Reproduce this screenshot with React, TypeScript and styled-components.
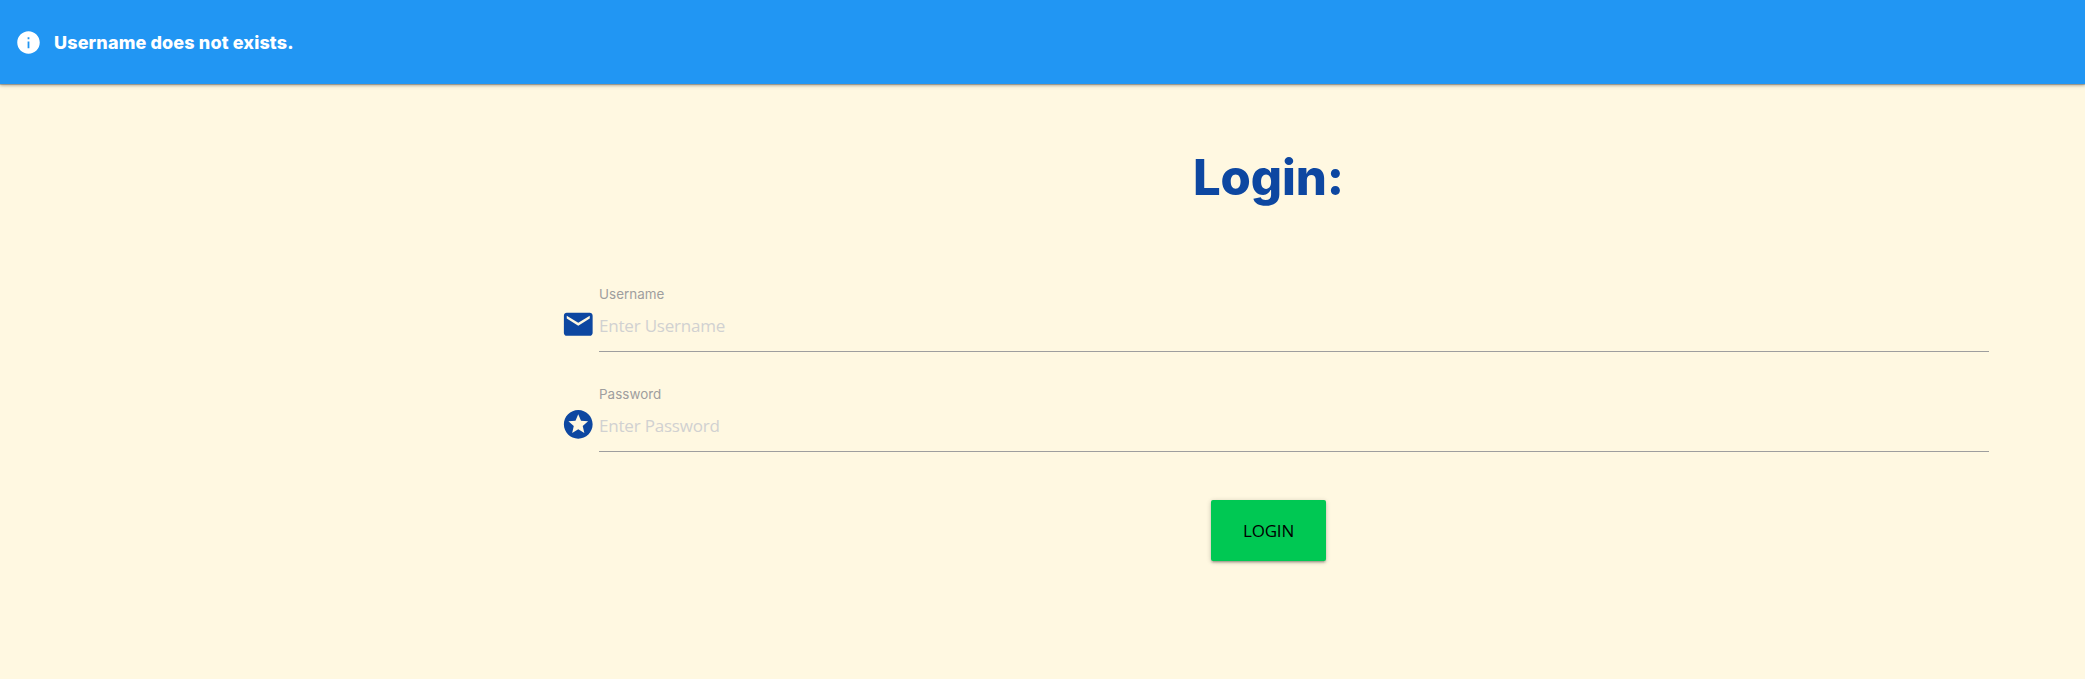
import React from 'react';
import styled, { createGlobalStyle } from 'styled-components';

const GlobalStyle = createGlobalStyle`
  *, *::before, *::after { box-sizing: border-box; }
  body {
    margin: 0;
    background: #fff8e1;
    font-family: Inter, "Liberation Sans", sans-serif;
  }
`;

const Page = styled.div`
  min-height: 100vh;
  overflow: hidden;
`;

const Alert = styled.div`
  display: flex;
  align-items: center;
  height: 84px;
  padding-left: 15px;
  gap: 12px;
  background: #2196f3;
  color: #fff;
  box-shadow: 0 2px 2px 0 rgba(0, 0, 0, 0.14), 0 1px 0 0 rgba(0, 0, 0, 0.2),
    0 1px 5px 0 rgba(0, 0, 0, 0.2);
`;

const AlertText = styled.strong`
  padding-top: 1px;
  font-size: 18px;
  line-height: 26px;
  font-weight: 800;
  letter-spacing: 0.13px;
  white-space: nowrap;
`;

const Form = styled.form`
  display: flex;
  flex-direction: column;
  align-items: center;
  margin: 0 96px 0 548px;
  padding-top: 64px;
`;

const Title = styled.h1`
  margin: 0;
  font-size: 49px;
  line-height: 60px;
  font-weight: 800;
  letter-spacing: -0.1px;
  color: #0d47a1;
`;

const Fields = styled.div`
  width: 100%;
  padding: 77px 0 0 13px;
`;

const Field = styled.div`
  display: flex;
  height: 100px;
  gap: 3.500px;
`;

const FieldIcon = styled.svg`
  flex: none;
  width: 34.500px;
  height: 34.500px;
  margin-top: 22px;
  fill: #0d47a1;
`;

const FieldBody = styled.div`
  flex: 1;
  display: flex;
  flex-direction: column;
`;

const Label = styled.label`
  height: 19px;
  font-size: 13.400px;
  line-height: 18px;
  letter-spacing: 0.05px;
  color: #9e9e9e;
`;

const Input = styled.input`
  height: 48px;
  padding: 0 0 5px;
  border: 0;
  border-bottom: 1px solid #9e9e9e;
  outline: 0;
  background: transparent;
  font-family: "Open Sans", "Noto Sans", sans-serif;
  font-size: 17px;
  letter-spacing: -0.2px;

  &::placeholder {
    color: #d1d1d1;
    opacity: 1;
  }
`;

const Button = styled.button`
  width: 115px;
  height: 61px;
  margin-top: 15px;
  padding: 0;
  border: 0;
  border-radius: 2px;
  background: #00c853;
  color: #000;
  font-family: "Open Sans", "Noto Sans", sans-serif;
  font-size: 17px;
  letter-spacing: -0.2px;
  box-shadow: 0 2px 2px 0 rgba(0, 0, 0, 0.14), 0 3px 1px -2px rgba(0, 0, 0, 0.12),
    0 1px 5px 0 rgba(0, 0, 0, 0.2);
`;

export default function App() {
  return (
    <Page>
      <GlobalStyle />
      <Alert role="alert">
        <svg width="27" height="27" viewBox="0 0 24 24" fill="#fff">
          <path d="M12 2C6.480 2 2 6.480 2 12s4.480 10 10 10 10-4.480 10-10S17.520 2 12 2zm.8 15h-1.600v-6h1.600v6zm0-8h-1.600V7.400h1.600V9z" />
        </svg>
        <AlertText>Username does not exists.</AlertText>
      </Alert>
      <Form>
        <Title>Login:</Title>
        <Fields>
          <Field>
            <FieldIcon viewBox="0 0 24 24">
              <path d="M20 4H4c-1.100 0-1.990.9-1.990 2L2 18c0 1.100.9 2 2 2h16c1.100 0 2-.9 2-2V6c0-1.100-.9-2-2-2zm0 4l-8 5-8-5V6l8 5 8-5v2z" />
            </FieldIcon>
            <FieldBody>
              <Label htmlFor="username">Username</Label>
              <Input id="username" placeholder="Enter Username" />
            </FieldBody>
          </Field>
          <Field>
            <FieldIcon viewBox="0 0 24 24">
              <path d="M11.990 2C6.470 2 2 6.480 2 12s4.470 10 9.990 10C17.520 22 22 17.520 22 12S17.520 2 11.990 2zm4.240 16L12 15.450 7.770 18l1.120-4.810-3.730-3.230 4.920-.420L12 5l1.920 4.530 4.920.420-3.730 3.230L16.230 18z" />
            </FieldIcon>
            <FieldBody>
              <Label htmlFor="password">Password</Label>
              <Input id="password" type="password" placeholder="Enter Password" />
            </FieldBody>
          </Field>
        </Fields>
        <Button type="button">LOGIN</Button>
      </Form>
    </Page>
  );
}
